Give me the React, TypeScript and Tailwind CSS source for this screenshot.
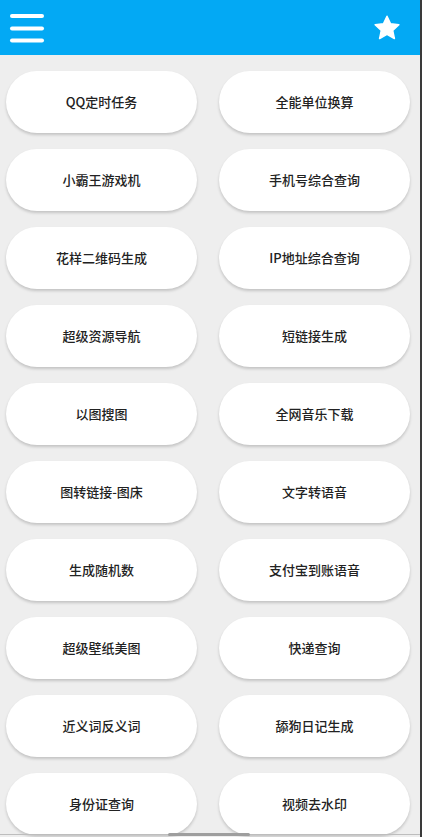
const TOOLS = [
  'QQ定时任务', '全能单位换算',
  '小霸王游戏机', '手机号综合查询',
  '花样二维码生成', 'IP地址综合查询',
  '超级资源导航', '短链接生成',
  '以图搜图', '全网音乐下载',
  '图转链接-图床', '文字转语音',
  '生成随机数', '支付宝到账语音',
  '超级壁纸美图', '快递查询',
  '近义词反义词', '舔狗日记生成',
  '身份证查询', '视频去水印',
];

function MenuIcon() {
  return (
    <svg width="36" height="30" viewBox="0 0 36 30" className="block">
      <g stroke="white" strokeWidth="4" strokeLinecap="round">
        <line x1="3" y1="3" x2="33" y2="3" />
        <line x1="3" y1="15.5" x2="33" y2="15.5" />
        <line x1="3" y1="27.5" x2="33" y2="27.5" />
      </g>
    </svg>
  );
}

function StarIcon() {
  return (
    <svg width="30" height="30" viewBox="0 0 24 24" className="block">
      <path fill="white" stroke="white" strokeWidth="1.2" strokeLinejoin="round"
        d="M12 2.6l2.85 6.08 6.65.73-4.95 4.5 1.38 6.55L12 17.1l-5.93 3.36 1.38-6.55-4.95-4.5 6.65-.73z" />
    </svg>
  );
}

export default function App() {
  return (
    <div className="relative h-[837px] w-[422px] overflow-hidden bg-[#eeeeee] font-['Noto_Sans_CJK_SC','Noto_Sans',sans-serif]">
      <div className="flex h-[55px] items-center justify-between bg-[#03a9f4] pl-[9px] pr-[20px]">
        <MenuIcon />
        <StarIcon />
      </div>

      <div className="grid grid-cols-2 gap-x-[22px] gap-y-[16px] pl-[6px] pr-[12px] pt-[16px]">
        {TOOLS.map(t => (
          <button key={t}
            className="flex h-[62px] items-center justify-center rounded-full bg-white text-[13px] font-medium text-[#222] shadow-[0_2px_3px_rgba(0,0,0,0.18)]">
            {t}
          </button>
        ))}
      </div>

      <div className="absolute bottom-[2px] left-0 right-0 h-px bg-[#bdbdbd]" />
      <div className="absolute bottom-[1px] left-[168px] h-[3px] w-[82px] rounded-full bg-[#9e9e9e]" />
      <div className="absolute bottom-0 right-0 top-0 w-[2px] bg-[#3a3a3a]" />
    </div>
  );
}
